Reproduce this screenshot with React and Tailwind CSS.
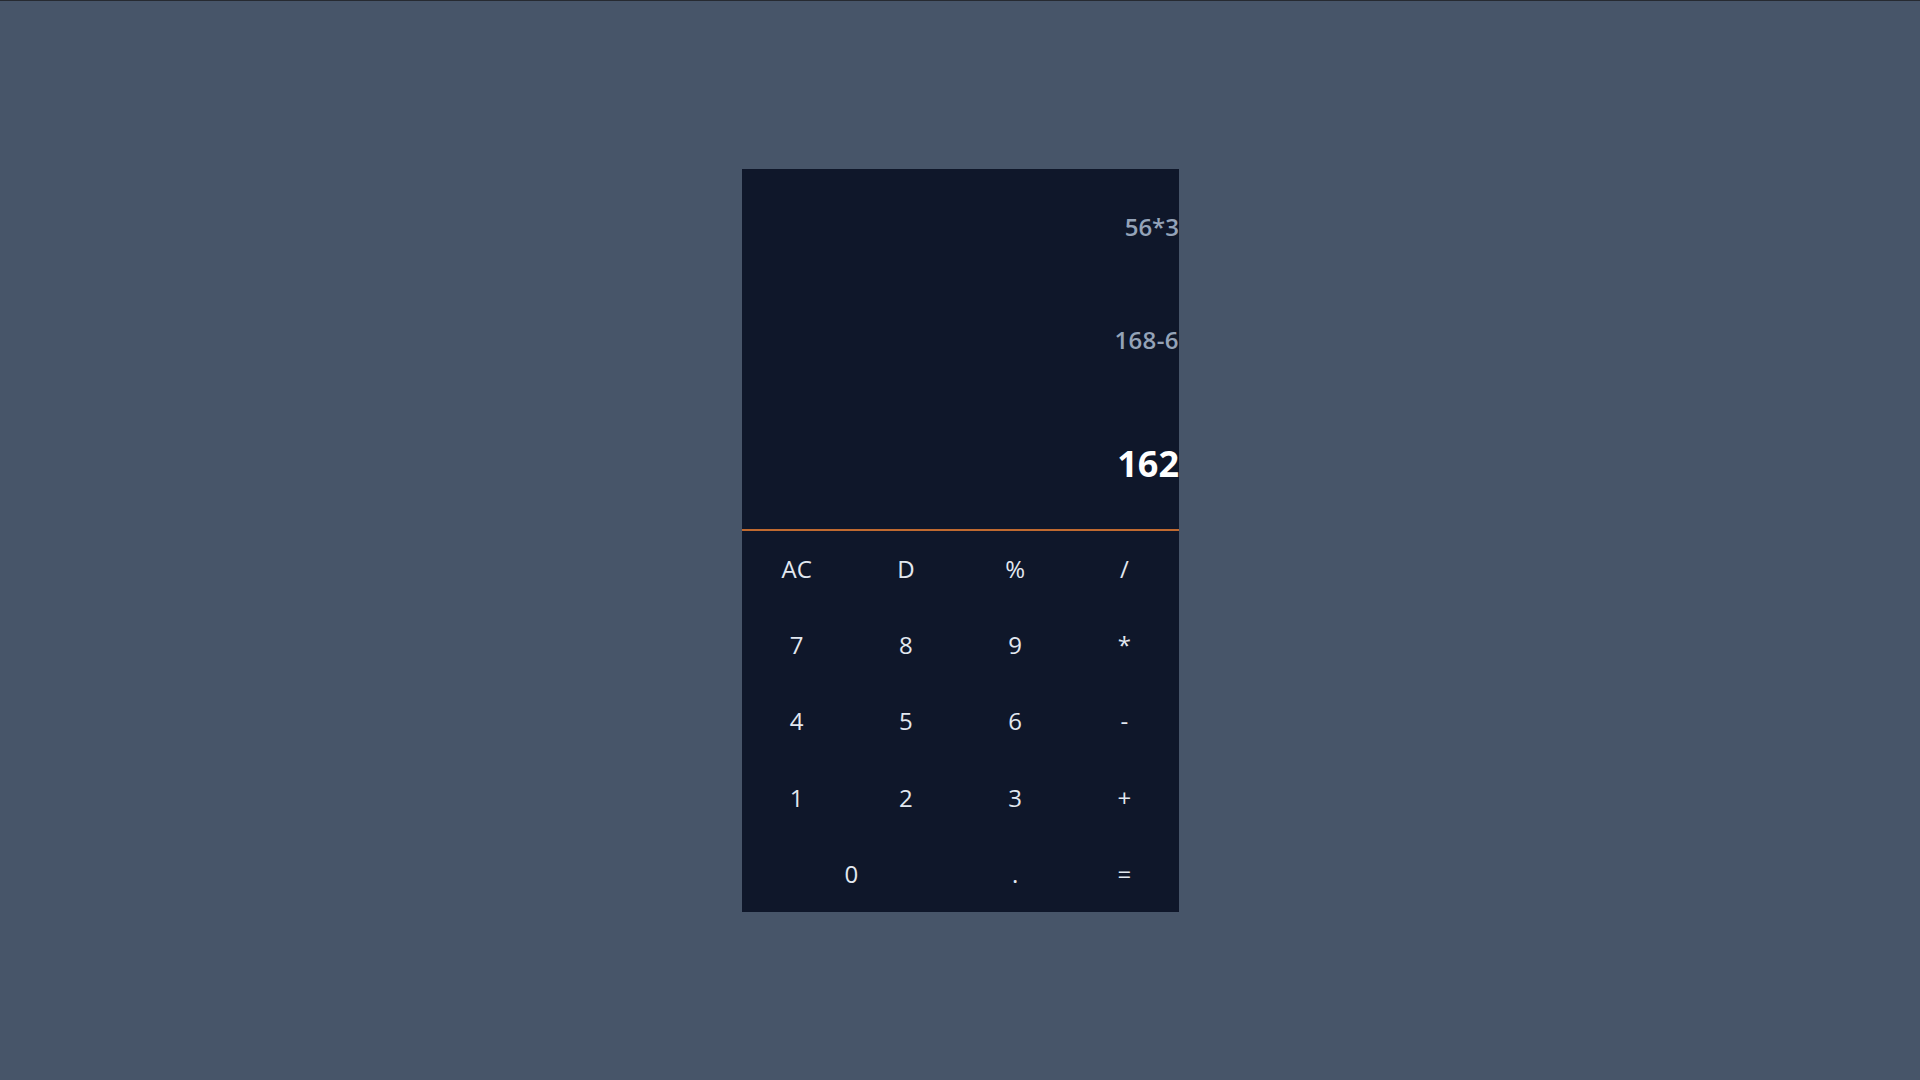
import React from 'react';

const KEYS = [
  { label: 'AC' },
  { label: 'D' },
  { label: '%' },
  { label: '/' },
  { label: '7' },
  { label: '8' },
  { label: '9' },
  { label: '*' },
  { label: '4' },
  { label: '5' },
  { label: '6' },
  { label: '-' },
  { label: '1' },
  { label: '2' },
  { label: '3' },
  { label: '+' },
  { label: '0', wide: true },
  { label: '.' },
  { label: '=' },
];

export default function App() {
  return (
    <div
      className="min-h-screen bg-[#475569] flex flex-col"
      style={{ fontFamily: '"Open Sans", "Noto Sans", sans-serif' }}
    >
      <div className="h-px bg-[#262a31]" />
      <div className="flex-1 flex items-center justify-center pl-px">
        <div className="w-[437px] h-[743px] bg-[#0f172a] flex flex-col">
          {/* Display */}
          <div className="h-[360px] flex flex-col items-end">
            <p className="mt-[42px] h-8 leading-8 text-2xl font-semibold text-[#94a3b8]">56*3</p>
            <p className="mt-[81px] h-8 leading-8 text-2xl font-semibold text-[#94a3b8] tracking-[0.4px]">168-6</p>
            <p className="mt-[88px] h-10 leading-10 text-4xl font-bold text-white">162</p>
          </div>
          <div className="h-[2px] bg-[#c06a30]" />

          {/* Keypad */}
          <div className="flex-1 grid grid-cols-4 grid-rows-5">
            {KEYS.map((k) => (
              <button
                key={k.label}
                type="button"
                className={`flex items-center justify-center text-2xl text-[#e2e8f0] ${k.wide ? 'col-span-2' : ''}`}
              >
                {k.label}
              </button>
            ))}
          </div>
        </div>
      </div>
    </div>
  );
}
